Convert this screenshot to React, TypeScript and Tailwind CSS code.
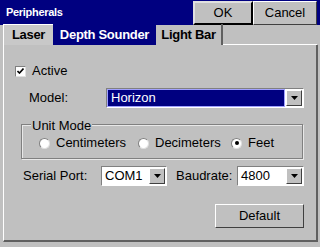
import React from 'react';

const Radio = ({ checked }: { checked?: boolean }) => (
    <span className="relative inline-block w-[11px] h-[11px] rounded-full bg-white border border-t-[#808080] border-l-[#808080] border-r-[#e0e0e0] border-b-[#e0e0e0]">
        {checked && <span className="absolute left-[2.5px] top-[2.5px] w-[4px] h-[4px] rounded-full bg-black" />}
    </span>
);

const Arrow = () => (
    <span className="flex items-center justify-center w-[16px] h-full bg-[#c0c0c0] border border-t-white border-l-white border-r-[#404040] border-b-[#404040]">
        <svg width="7" height="4" viewBox="0 0 7 4"><path d="M0 0h7L3.5 4z" fill="#000" /></svg>
    </span>
);

const Combo = ({ value, selected, className }: { value: string; selected?: boolean; className: string }) => (
    <div className={`flex h-[20px] border border-t-[#808080] border-l-[#808080] border-r-white border-b-white ${className}`}>
        <div className={`flex-1 flex items-center pl-[3px] ${selected ? 'bg-[#000080] text-white border border-[#a0a0ff]' : 'bg-white text-black'}`}>{value}</div>
        <div className="bg-white p-px h-full"><Arrow /></div>
    </div>
);

export default function App() {
    return (
        <div className="w-[320px] h-[247px] bg-[#c0c0c0] overflow-hidden text-[13px] text-black" style={{ fontFamily: '"Liberation Sans", Arial, sans-serif' }}>
            <div className="h-[25px] bg-[#000080] flex items-center pl-[6px]">
                <span className="text-white font-bold text-[11px] tracking-[-0.3px] flex-1">Peripherals</span>
                <div className="flex h-[24px] mt-[1px] mr-[3px]">
                    <button className="w-[60px] h-full bg-[#c0c0c0] border-2 border-t-[#e0e0e0] border-l-[#e0e0e0] border-r-black border-b-black text-[13px]">OK</button>
                    <button className="w-[64px] h-full bg-[#c0c0c0] border border-t-white border-l-white border-r-[#404040] border-b-[#404040] text-[13px]">Cancel</button>
                </div>
            </div>
            <div className="flex h-[21px] pl-[3px] mt-[-1px] font-bold text-[13px] tracking-[-0.3px]">
                <div className="w-[50px] flex items-end justify-center pb-[1px] bg-[#c8c8c8] border-t border-l border-white">Laser</div>
                <div className="w-[103px] flex items-end justify-center pb-[1px] bg-[#000080] text-white">Depth Sounder</div>
                <div className="w-[67px] flex items-end justify-center pb-[1px] border-r-2 border-[#606060]">Light Bar</div>
                <div className="flex-1 border-b border-white mr-[3px]" />
            </div>
            <div className="h-[197px] ml-[3px] mr-[2px] border-l border-white border-b-2 border-b-[#606060] border-r-2 border-r-[#606060] flex flex-col pl-[11px] pr-[12px] pt-[19px]">
                <div className="flex items-center gap-[6px] h-[14px]">
                    <span className="relative w-[11px] h-[11px] bg-white border border-t-[#808080] border-l-[#808080] border-r-[#e0e0e0] border-b-[#e0e0e0] flex items-center justify-center">
                        <svg width="7" height="6" viewBox="0 0 7 6"><path d="M0.5 3l2 2 4-4.5" stroke="#000" strokeWidth="1.6" fill="none" /></svg>
                    </span>
                    <span>Active</span>
                </div>
                <div className="flex items-center mt-[10px] pl-[14px]">
                    <span className="w-[77px]">Model:</span>
                    <Combo value="Horizon" selected className="w-[198px]" />
                </div>
                <div className="relative mt-[16px] ml-[6px] mr-[1px] h-[35px] border border-[#808080] shadow-[inset_1px_1px_0_#e8e8e8,1px_1px_0_#e8e8e8] flex items-center pl-[17px] pt-[9px] pb-[6px]">
                    <span className="absolute -top-[9px] left-[9px] px-[1px] bg-[#c0c0c0]">Unit Mode</span>
                    <label className="flex items-center gap-[6px] w-[99px]"><Radio /><span>Centimeters</span></label>
                    <label className="flex items-center gap-[6px] w-[93px]"><Radio /><span>Decimeters</span></label>
                    <label className="flex items-center gap-[6px]"><Radio checked /><span>Feet</span></label>
                </div>
                <div className="flex items-center mt-[7px] pl-[8px]">
                    <span className="w-[78px]">Serial Port:</span>
                    <Combo value="COM1" className="w-[66px]" />
                    <span className="ml-[9px] w-[61px]">Baudrate:</span>
                    <Combo value="4800" className="w-[67px]" />
                </div>
                <div className="flex justify-end mt-[18px]">
                    <button className="w-[89px] h-[24px] bg-[#c0c0c0] border border-t-white border-l-white border-r-[#404040] border-b-[#404040] text-[13px]">Default</button>
                </div>
            </div>
        </div>
    );
}
